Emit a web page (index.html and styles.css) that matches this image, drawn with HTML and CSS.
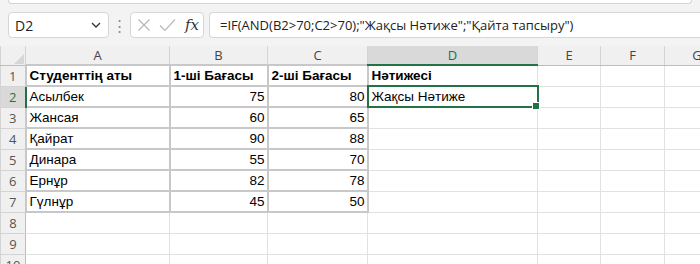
FILE: index.html
```html
<!DOCTYPE html>
<html lang="kk">
<head>
  <meta charset="UTF-8">
  <title>Excel</title>
  <link rel="stylesheet" href="styles.css">
</head>
<body>
  <div class="ribbon-edge"></div>

  <div class="fbar">
    <div class="namebox">
      <span>D2</span>
      <svg class="chev" width="10" height="6" viewBox="0 0 10 6"><path d="M1 1l4 4 4-4" fill="none" stroke="#333" stroke-width="1.3"/></svg>
    </div>
    <div class="dots">⋮</div>
    <div class="fxbox">
      <svg width="14" height="14" viewBox="0 0 14 14"><path d="M1.5 1.5l11 11M12.5 1.5l-11 11" stroke="#b8b8b8" stroke-width="1.2"/></svg>
      <svg width="17" height="14" viewBox="0 0 17 14"><path d="M1 7.5l5 5 10-11" fill="none" stroke="#b8b8b8" stroke-width="1.2"/></svg>
      <span class="fx">fx</span>
    </div>
    <div class="formula">=IF(AND(B2&gt;70;C2&gt;70);"Жақсы Нәтиже";"Қайта тапсыру")</div>
  </div>

  <table class="sheet">
    <colgroup>
      <col style="width:25px"><col style="width:144px"><col style="width:98px"><col style="width:100px">
      <col style="width:170px"><col style="width:63px"><col style="width:64px"><col>
    </colgroup>
    <tr class="hdr">
      <th class="corner"><svg width="10" height="10" viewBox="0 0 10 10"><path d="M10 0v10H0z" fill="#d6d6d6"/></svg></th>
      <th>A</th><th>B</th><th>C</th><th class="sel">D</th><th>E</th><th>F</th><th>G</th>
    </tr>
    <tr>
      <th class="rn">1</th>
      <td class="t b">Студенттің аты</td><td class="t b">1-ші Бағасы</td><td class="t b">2-ші Бағасы</td>
      <td class="b">Нәтижесі</td><td></td><td></td><td></td>
    </tr>
    <tr>
      <th class="rn rsel">2</th>
      <td class="t">Асылбек</td><td class="t n">75</td><td class="t n">80</td>
      <td class="active">Жақсы Нәтиже</td><td></td><td></td><td></td>
    </tr>
    <tr>
      <th class="rn">3</th>
      <td class="t">Жансая</td><td class="t n">60</td><td class="t n">65</td>
      <td></td><td></td><td></td><td></td>
    </tr>
    <tr>
      <th class="rn">4</th>
      <td class="t">Қайрат</td><td class="t n">90</td><td class="t n">88</td>
      <td></td><td></td><td></td><td></td>
    </tr>
    <tr>
      <th class="rn">5</th>
      <td class="t">Динара</td><td class="t n">55</td><td class="t n">70</td>
      <td></td><td></td><td></td><td></td>
    </tr>
    <tr>
      <th class="rn">6</th>
      <td class="t">Ернұр</td><td class="t n">82</td><td class="t n">78</td>
      <td></td><td></td><td></td><td></td>
    </tr>
    <tr>
      <th class="rn">7</th>
      <td class="t">Гүлнұр</td><td class="t n">45</td><td class="t n">50</td>
      <td></td><td></td><td></td><td></td>
    </tr>
    <tr><th class="rn">8</th><td></td><td></td><td></td><td></td><td></td><td></td><td></td></tr>
    <tr><th class="rn">9</th><td></td><td></td><td></td><td></td><td></td><td></td><td></td></tr>
    <tr><th class="rn">10</th><td></td><td></td><td></td><td></td><td></td><td></td><td></td></tr>
  </table>
</body>
</html>
```

FILE: styles.css
```css
*{box-sizing:border-box;margin:0;padding:0}
body{
  background:#f3f3f3;font-family:'Liberation Sans',Arial,sans-serif;
  width:700px;height:264px;overflow:hidden;color:#000
}
.ribbon-edge{
  height:4px;margin:0 8px;background:#fff;border:1px solid #d4d4d4;border-top:none;
  border-radius:0 0 6px 6px
}
/* formula bar */
.fbar{display:flex;align-items:center;height:26px;margin-top:8px;padding-left:8px}
.namebox{
  width:101px;height:26px;background:#fff;border:1px solid #d6d6d6;border-radius:4px;
  display:flex;align-items:center;justify-content:space-between;padding:0 7px 0 6px;
  font-family:'Open Sans',sans-serif;font-size:14px;color:#222
}
.dots{width:21px;text-align:center;color:#8a8a8a;font-size:15px;line-height:1}
.fxbox{
  width:74px;height:26px;background:#fff;border:1px solid #d6d6d6;border-radius:4px;
  display:flex;align-items:center;gap:8px;padding-left:6px
}
.fx{font-family:'DejaVu Serif','Liberation Serif',serif;font-style:italic;font-size:15px;color:#333;margin-left:1px}
.formula{
  flex:1;height:26px;margin-left:5px;background:#fff;border:1px solid #d6d6d6;border-right:none;
  border-radius:4px 0 0 4px;padding-left:10px;line-height:24px;
  font-family:'Open Sans',sans-serif;font-size:13px;color:#222;white-space:nowrap
}
/* sheet */
.sheet{
  margin-top:8px;border-collapse:collapse;table-layout:fixed;width:730px;background:#fff
}
.sheet td,.sheet th{height:21px;border:1px solid #e1e1e1;padding:0 3px;font-size:13.5px;white-space:nowrap;overflow:visible}
.hdr th{
  height:19px;background:#f0f0f0;font-weight:normal;color:#444;border-color:#d4d4d4;
  border-top:none;font-family:'Open Sans',sans-serif;font-size:13px;border-bottom:1px solid #bdbdbd
}
.hdr th.sel{background:#d9d9d9;color:#217346;border-bottom:2px solid #217346}
.corner{text-align:right;vertical-align:bottom;padding:0 1px 1px 0!important}
.corner svg{display:block;margin-left:auto}
.rn{
  background:#f0f0f0;font-weight:normal;color:#555;border-color:#d4d4d4!important;
  font-family:'Open Sans',sans-serif;font-size:13px!important;text-align:center;padding:0!important;
  border-right:1px solid #bdbdbd!important
}
.rn.rsel{background:#d9d9d9;color:#217346;border-right:2px solid #217346!important}
td.b{font-weight:bold}
td.t{border:2px solid #c8c8c8}
td.n{text-align:right;padding-right:2px}
td.active{position:relative;outline:2px solid #217346;outline-offset:-1px}
td.active::after{
  content:"";position:absolute;right:-3px;bottom:-3px;width:6px;height:6px;
  background:#217346;border:1px solid #fff
}
```
